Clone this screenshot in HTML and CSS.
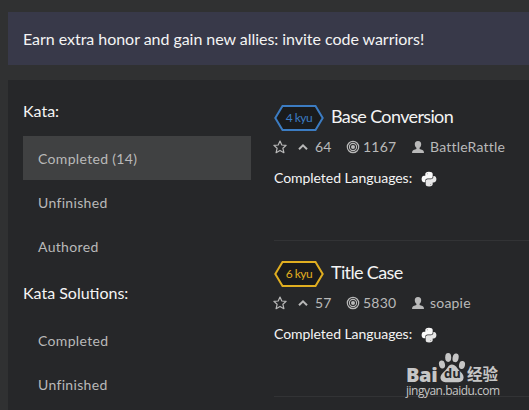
FILE: index.html
```html
<!DOCTYPE html>
<html lang="en">
<head>
<meta charset="utf-8">
<title>Kata</title>
<link rel="stylesheet" href="styles.css">
</head>
<body>
<svg class="defs" width="0" height="0" aria-hidden="true">
  <symbol id="star" viewBox="0 0 14 14"><path d="M7 1 8.8 5 13.1 5.4 9.9 8.3 10.9 12.7 7 10.4 3.1 12.7 4.1 8.3 .9 5.4 5.2 5Z" fill="none" stroke="currentColor" stroke-width="1.2" stroke-linejoin="round"/></symbol>
  <symbol id="up" viewBox="0 0 10 8"><path d="M1 6.2 5 2.3 9 6.2" fill="none" stroke="currentColor" stroke-width="2"/></symbol>
  <symbol id="target" viewBox="0 0 14 14"><g fill="none" stroke="currentColor"><circle cx="7" cy="7" r="5.7" stroke-width="1.2"/><circle cx="7" cy="7" r="3.6" stroke-width="1.1"/></g><circle cx="7" cy="7" r="2" fill="currentColor"/></symbol>
  <symbol id="user" viewBox="0 0 12 12"><path d="M6 0C3.7 0 2.7 1.5 2.8 3.4 2.9 5 3.6 5.8 4.4 6.7V8L1.5 9.1Q0 9.8 0 12H12Q12 9.8 10.5 9.1L7.6 8V6.7C8.4 5.8 9.1 5 9.2 3.4 9.3 1.5 8.3 0 6 0Z" fill="currentColor"/></symbol>
  <symbol id="python" viewBox="0 0 16 16"><path d="M7.9 .7C5.2.7 4.3 1.8 4.3 2.9V4.7H3.1C1.3 4.7.6 6.5.6 8.1s.8 3.2 2.4 3.2H4.3V9.5C4.3 8.2 5.3 7.5 6.5 7.5H9.7C10.8 7.5 11.7 6.5 11.7 5.4V2.9C11.7 1.4 10.2.7 7.9.7Z" fill="#fafafa"/><path d="M8.1 15.5C10.8 15.5 11.7 14.4 11.7 13.3V11.5H12.9C14.7 11.5 15.4 9.7 15.4 8.1S14.6 4.9 13 4.9H12.3V6.1C12.3 7.4 11.1 8.2 9.9 8.2H6.7C5.6 8.2 4.7 9 4.7 10.1V13.3C4.7 14.8 5.8 15.5 8.1 15.5Z" fill="#e6e6e6"/><g fill="#888"><circle cx="6.3" cy="2.7" r=".5"/><circle cx="9.7" cy="13.4" r=".5"/></g></symbol>
  <symbol id="hex" viewBox="0 0 50 28"><path d="M8.5 2H41.5L48.7 14 41.5 26H8.5L1.3 14Z" fill="#1a1b1c" stroke="currentColor" stroke-width="2"/></symbol>
</svg>

<header class="banner">Earn extra honor and gain new allies: invite code warriors!</header>

<main class="panel">
  <nav class="sidebar">
    <h2>Kata:</h2>
    <ul>
      <li class="active">Completed (14)</li>
      <li>Unfinished</li>
      <li>Authored</li>
    </ul>
    <h2>Kata Solutions:</h2>
    <ul>
      <li>Completed</li>
      <li>Unfinished</li>
    </ul>
  </nav>
  <section class="list">
    <article class="kata">
      <div class="title"><span class="rank blue"><svg><use href="#hex"/></svg><b>4 kyu</b></span><h3>Base Conversion</h3></div>
      <div class="stats">
        <svg class="i-star"><use href="#star"/></svg>
        <svg class="i-up"><use href="#up"/></svg><span class="votes">64</span>
        <svg class="i-target"><use href="#target"/></svg><span class="count">1167</span>
        <svg class="i-user"><use href="#user"/></svg><span>BattleRattle</span>
      </div>
      <div class="langs"><span>Completed Languages:</span><svg><use href="#python"/></svg></div>
    </article>
    <article class="kata">
      <div class="title"><span class="rank yellow"><svg><use href="#hex"/></svg><b>6 kyu</b></span><h3>Title Case</h3></div>
      <div class="stats">
        <svg class="i-star"><use href="#star"/></svg>
        <svg class="i-up"><use href="#up"/></svg><span class="votes">57</span>
        <svg class="i-target"><use href="#target"/></svg><span class="count">5830</span>
        <svg class="i-user"><use href="#user"/></svg><span>soapie</span>
      </div>
      <div class="langs"><span>Completed Languages:</span><svg><use href="#python"/></svg></div>
    </article>
  </section>
</main>

<div class="watermark">
  <div class="brand">
    <span class="bai">Bai</span>
    <span class="paw">
      <svg viewBox="0 0 28 32"><g fill="currentColor"><ellipse cx="4" cy="12.5" rx="3" ry="4" transform="rotate(-12 4 12.5)"/><ellipse cx="10.2" cy="5.5" rx="3" ry="4.4"/><ellipse cx="17.6" cy="5.8" rx="3" ry="4.4" transform="rotate(12 17.6 5.8)"/><ellipse cx="24" cy="13" rx="3" ry="4" transform="rotate(12 24 13)"/><path d="M13.8 12.5C18 12.5 19 16.5 22 19.2 25.2 22 26.2 24.5 25.3 27 24 31 19.5 30.3 14 30.3S4 31 2.7 27C1.8 24 4 21.3 7 18.7 9.8 16.4 10.2 12.5 13.8 12.5Z"/></g></svg>
      <span class="du">du</span>
    </span>
    <span class="cn">经验</span>
  </div>
  <div class="url">jingyan.baidu.com</div>
</div>
</body>
</html>
```
FILE: styles.css
```css
* { box-sizing: border-box; }
body {
  margin: 0;
  width: 529px;
  height: 410px;
  overflow: hidden;
  background: #303132;
  color: #f4f4f4;
  font-family: Lato, "Noto Sans CJK SC", sans-serif;
  padding: 12px 0 0 8px;
}
.defs { position: absolute; }
h2, h3, ul { margin: 0; padding: 0; font-weight: 400; }
.banner {
  height: 53px;
  padding-left: 15px;
  line-height: 54px;
  font-size: 16px;
  letter-spacing: -.04px;
  white-space: nowrap;
  background: #383949;
}
.panel {
  display: flex;
  height: 330px;
  margin-top: 15px;
  padding-left: 15px;
  background: #262729;
}
.sidebar { width: 228px; margin-right: 23px; }
.sidebar h2 { font-size: 16px; height: 51px; line-height: 50px; }
.sidebar ul { list-style: none; }
.sidebar h2:first-child { height: 56px; line-height: 62px; }
.sidebar li {
  height: 44px;
  padding-left: 15px;
  line-height: 46px;
  font-size: 14px;
  letter-spacing: .33px;
  color: #b9b9b9;
}
.sidebar h2 + ul:last-child li { line-height: 44px; }
.sidebar .active { background: #404142; }
.list { flex: 1; }
.kata {
  height: 156px;
  padding-top: 19px;
  border-bottom: 1px solid #323335;
}
.kata:first-child { height: 161px; padding-top: 24px; }
.title { display: flex; height: 28px; }
.title h3 { margin-left: 7px; font-size: 18px; line-height: 24px; letter-spacing: -.64px; }
.rank { position: relative; width: 50px; height: 28px; }
.rank svg { width: 50px; height: 28px; display: block; }
.rank b { position: absolute; inset: 0; text-align: center; font: 400 12px/28px Lato, sans-serif; letter-spacing: -.5px; }
.blue { color: #3c7cc2; }
.yellow { color: #e0ae20; }
.stats {
  display: flex;
  align-items: center;
  height: 29px;
  font-size: 14px;
  letter-spacing: .2px;
  color: #b9b9b9;
}
.i-star { width: 14px; height: 14px; margin: 0 11px 0 -1px; }
.i-up { width: 10px; height: 8px; margin-right: 7px; }
.votes { width: 31px; }
.i-target { width: 14px; height: 14px; margin-right: 3px; }
.count { width: 49px; }
.i-user { width: 12px; height: 12px; margin-right: 6px; }
.langs { display: flex; align-items: center; height: 32px; font-size: 14px; letter-spacing: -.05px; }
.langs svg { width: 16px; height: 16px; margin: 3px 0 0 9px; }
.watermark {
  position: absolute;
  left: 406px;
  top: 352px;
  width: 96px;
  color: #c6c6c6;
}
.brand { display: flex; height: 32px; }
.bai { width: 32px; font: 800 20px/46px "Open Sans", sans-serif; letter-spacing: -.4px; }
.paw { position: relative; width: 29px; height: 32px; }
.paw svg { width: 28px; height: 32px; display: block; }
.du { position: absolute; left: 6px; bottom: 3px; color: #262729; font: 700 13px/15px "Open Sans", sans-serif; }
.cn { font: 700 15.5px/42px "Noto Sans CJK SC", sans-serif; }
.url { font: 12px/14px "Open Sans", sans-serif; letter-spacing: -.5px; white-space: nowrap; }
```
